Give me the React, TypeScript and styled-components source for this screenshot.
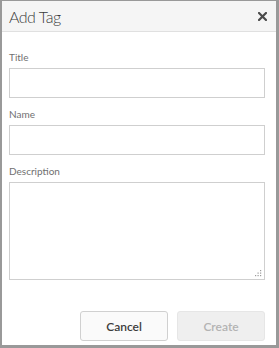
import React from 'react';
import styled, { createGlobalStyle } from 'styled-components';

const GlobalStyle = createGlobalStyle`
  html, body {
    margin: 0;
    padding: 0;
    background: #999999;
  }
  body {
    font-family: Lato, "Open Sans", sans-serif;
  }
`;

const Backdrop = styled.div`
  padding: 1px 3px 3px 2px;
`;

const Dialog = styled.div`
  width: 274px;
  height: 344px;
  background: #ffffff;
  display: flex;
  flex-direction: column;
  box-sizing: border-box;
`;

const Header = styled.div`
  height: 30px;
  display: flex;
  align-items: center;
  justify-content: space-between;
  padding: 0 9px 0 7px;
  background: #f5f5f5;
  border-bottom: 1px solid #e0e0e0;
`;

const HeaderTitle = styled.h2`
  margin: 0;
  font-size: 16px;
  font-weight: 300;
  letter-spacing: -0.5px;
  color: #3a3a3a;
`;

const CloseButton = styled.button`
  border: 0;
  background: none;
  padding: 0;
  width: 10px;
  height: 10px;
  display: flex;
  align-items: center;
  justify-content: center;
  cursor: pointer;
`;

const Form = styled.form`
  flex: 1;
  display: flex;
  flex-direction: column;
  gap: 10px;
  padding: 19px 11px 0 7px;
`;

const Field = styled.div`
  display: flex;
  flex-direction: column;
`;

const Label = styled.label`
  font-size: 10px;
  line-height: 13px;
  height: 13px;
  margin-bottom: 4px;
  color: #707070;
`;

const TextInput = styled.input`
  box-sizing: border-box;
  height: 30px;
  width: 100%;
  border: 1px solid #cfcfcf;
  border-radius: 0;
  padding: 0 8px;
  font-family: inherit;
  font-size: 12px;
  outline: none;
`;

const AreaWrap = styled.div`
  position: relative;
`;

const TextArea = styled.textarea`
  display: block;
  box-sizing: border-box;
  width: 100%;
  height: 98px;
  border: 1px solid #cfcfcf;
  border-radius: 0;
  padding: 6px 8px;
  font-family: inherit;
  font-size: 12px;
  resize: none;
  outline: none;
`;

const Grip = styled.svg`
  position: absolute;
  right: 3px;
  bottom: 3px;
`;

const Footer = styled.div`
  display: flex;
  justify-content: flex-end;
  gap: 9px;
  padding: 0 11px 4px 7px;
`;

const Button = styled.button<{ $disabled?: boolean }>`
  box-sizing: border-box;
  width: 88px;
  height: 30px;
  border-radius: 3px;
  font-family: inherit;
  font-size: 12px;
  font-weight: 600;
  border: 1px solid ${(p) => (p.$disabled ? '#e6e6e6' : '#d0d0d0')};
  background: ${(p) => (p.$disabled ? '#efefef' : '#fafafa')};
  color: ${(p) => (p.$disabled ? '#b3b3b3' : '#3c3c3c')};
  cursor: ${(p) => (p.$disabled ? 'default' : 'pointer')};
`;

const App: React.FC = () => {
  return (
    <>
      <GlobalStyle />
      <Backdrop>
        <Dialog>
          <Header>
            <HeaderTitle>Add Tag</HeaderTitle>
            <CloseButton type="button" aria-label="Close">
              <svg width="9" height="9" viewBox="0 0 9 9">
                <path d="M1 1 L8 8 M8 1 L1 8" stroke="#4b4b4b" strokeWidth="2.2" strokeLinecap="square" />
              </svg>
            </CloseButton>
          </Header>
          <Form>
            <Field>
              <Label>Title</Label>
              <TextInput />
            </Field>
            <Field>
              <Label>Name</Label>
              <TextInput />
            </Field>
            <Field>
              <Label>Description</Label>
              <AreaWrap>
                <TextArea />
                <Grip width="7" height="7" viewBox="0 0 7 7">
                  <rect x="5" y="0" width="1.2" height="1.2" fill="#9a9a9a" />
                  <rect x="2.5" y="2.5" width="1.2" height="1.2" fill="#9a9a9a" />
                  <rect x="5" y="2.5" width="1.2" height="1.2" fill="#9a9a9a" />
                  <rect x="0" y="5" width="1.2" height="1.2" fill="#9a9a9a" />
                  <rect x="2.5" y="5" width="1.2" height="1.2" fill="#9a9a9a" />
                  <rect x="5" y="5" width="1.2" height="1.2" fill="#9a9a9a" />
                </Grip>
              </AreaWrap>
            </Field>
          </Form>
          <Footer>
            <Button type="button">Cancel</Button>
            <Button type="button" $disabled>Create</Button>
          </Footer>
        </Dialog>
      </Backdrop>
    </>
  );
};

export default App;
